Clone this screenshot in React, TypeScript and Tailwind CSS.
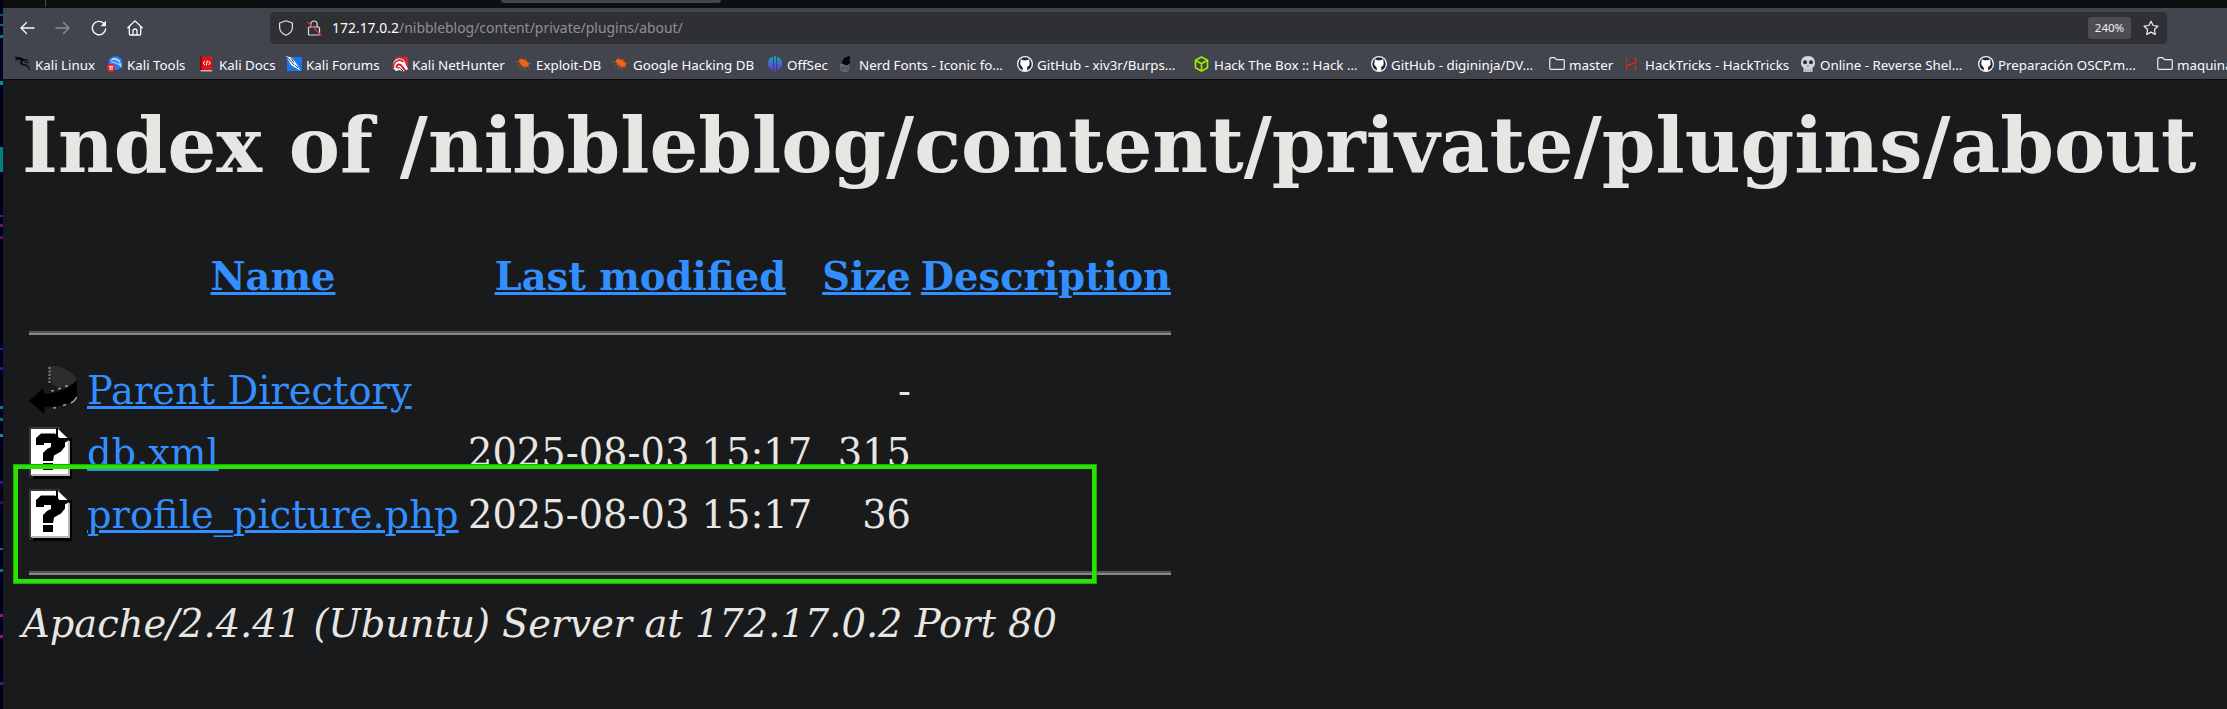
import React from "react";

const S = ({ children }: { children: React.ReactNode }) => (
  <svg viewBox="0 0 16 16" className="h-4 w-4 shrink-0" fill="none">{children}</svg>
);

const KaliIcon = () => (
  <S>
    <path d="M0 .8 5 1l4 2 3 .5 2 1.500-4-.5C6.500 5 6.500 7.500 9 8c4 .5 6 3 6 7.500-1.500-4-3-5.500-6-6C5 9 4 6.500 6 5L4 3.500 1 3z" fill="#08090a" />
    <path d="M0 4.500 5 3M9 6l5 .5" stroke="#08090a" strokeWidth=".9" />
  </S>
);
const ToolsIcon = () => (
  <S>
    <circle cx="8.500" cy="7" r="7" fill="#2878f0" />
    <path d="M3 4.500q4-2 7 0 4 2 4 6-2-3-5-3-2-2-5-1M5 3q4-2 8 2" stroke="#b5d3fb" strokeWidth="1.200" />
    <circle cx="4" cy="11.800" r="4" fill="#e8262e" />
    <path d="M2 10.500h4M3.200 10.500v3.500M5 10.500v3.500" stroke="#fff" strokeWidth=".9" />
  </S>
);
const DocsIcon = () => (
  <S>
    <path d="M1 .5h12v14H1z" fill="#e21318" />
    <path d="M1 0h1.800v16H1z" fill="#8c0b10" />
    <path d="M1.500 14H13v1.500H1.500z" fill="#c9b4bb" />
    <path d="M6 5 4.200 7 6 9m3.500-4 1.800 2-1.800 2M8.300 4.500l-1 5" stroke="#fff" />
  </S>
);
const ForumsIcon = () => (
  <S>
    <path d="M1 1h15v14H1z" fill="#1677ef" />
    <path d="m0 0 5 1.500 4 4 2 3 3.500 6.500L9 11.500 5 9z" fill="#f3f5f8" />
    <path d="m1 1 7 8M5 2.500l3 4M9 9l3 3" stroke="#26384d" strokeWidth=".9" />
  </S>
);
const NetHunterIcon = () => (
  <S>
    <path d="M3 1h13v13z" fill="#e0222e" />
    <path d="M1 12C0 5 4 2 8 2.500c4 .5 5 3 5.500 5.500L16 13l-4 2.500L7 14l-3 1z" fill="#fff" />
    <path d="M1.500 12c-.5-8 7-9.500 10-6" stroke="#d81e2e" strokeWidth="1.600" />
    <path d="M4.500 12c0-4.500 4-4.500 6-1l3 4" stroke="#d81e2e" strokeWidth="2" />
    <path d="M6 13c0-2 2-2 3 0l2 2" stroke="#1c1c20" />
  </S>
);
const BugIcon = () => (
  <S>
    <path d="M3 3.500q4-1.500 7 1l3 2.500-.5 3.500L8 11 5 9 3 6z" fill="#f26412" />
    <path d="M0 5.500l4 1M1.500 10l5-2M5 13l2-4M9 14l0-4M5 1.500l2 3M10 2.500 9 6M15.500 7.500 11 8M14 13.500l-4-4" stroke="#c9581d" strokeWidth=".7" />
  </S>
);
const OffSecIcon = () => (
  <S>
    <defs>
      <linearGradient id="offsec" x1="0" y1="0" x2="0" y2="16" gradientUnits="userSpaceOnUse">
        <stop stopColor="#14a8b8" /><stop offset="1" stopColor="#6a28dc" />
      </linearGradient>
    </defs>
    <path d="M6 .8v13.500A7 7 0 0 1 6 .8ZM10 .8v13.500A7 7 0 0 0 10 .8ZM7 .3h2V16H7z" fill="url(#offsec)" />
  </S>
);
const NerdIcon = () => (
  <S>
    <path d="M1 8.500q4-2 9 0v5L8 16H4l-3-2z" fill="#6c7076" />
    <path d="m3 6 2-4 5-2 1.500 1-1 2L11 7 8 9.500 3.500 8z" fill="#050607" />
    <path d="M3 10v5M5.500 10v6M8 10v5M1 12h9" stroke="#484c52" strokeWidth=".8" />
  </S>
);
const GitHubIcon = () => (
  <S>
    <circle cx="8" cy="8" r="8" fill="#f4f4f6" />
    <circle cx="8" cy="8" r="6.700" fill="#22262d" />
    <path d="m3.800 3 2.100 1.200h4.200L12.200 3l.3 3c.7 3-.7 4.500-2.800 4.900l.5 1.200V15H5.800v-3L5 10.500C3.500 10 2.800 8 3.500 6z" fill="#fff" />
  </S>
);
const BoxIcon = () => (
  <S><path d="m7.500 1 6 3.300v7.400l-6 3.400-6-3.400V4.300zM1.500 4.300l6 3.500 6-3.500M7.500 7.800V15" stroke="#9fef00" strokeWidth="1.600" strokeLinejoin="round" /></S>
);
const FolderIcon = () => (
  <S><path d="M.8 3q0-1.300 1.300-1.300h3.500l1.900 2H14q1.300 0 1.300 1.300v7q0 1.300-1.300 1.300H2.100Q.8 13.300.8 12z" stroke="#ededee" strokeWidth="1.200" /></S>
);
const TricksIcon = () => (
  <S><path d="M1.500 1.500V7M10.500 1.500V7L1.500 9.500V14.500M10.500 9v5.500" stroke="#e3261e" strokeWidth="1.300" /></S>
);
const SkullIcon = () => (
  <S>
    <path d="M8 0c5 0 7 3 7 7 0 2-.5 4-2.500 4.500V16h-9v-4.500C1.500 11 1 9 1 7c0-4 2-7 7-7Z" fill="#ccd6dd" />
    <circle cx="5" cy="6.300" r="2" fill="#292f33" /><circle cx="11" cy="6.300" r="2" fill="#292f33" />
    <path d="M7.200 10.500 8 9l.8 1.500z" fill="#292f33" />
    <path d="M5.500 13v3M8 13v3M10.500 13v3" stroke="#66757f" strokeWidth=".6" />
  </S>
);

const bookmarks: [string, React.FC, string][] = [
  ["Kali Linux", KaliIcon, "w-[92px]"],
  ["Kali Tools", ToolsIcon, "w-[92px]"],
  ["Kali Docs", DocsIcon, "w-[87px]"],
  ["Kali Forums", ForumsIcon, "w-[106px]"],
  ["Kali NetHunter", NetHunterIcon, "w-[124px]"],
  ["Exploit-DB", BugIcon, "w-[97px]"],
  ["Google Hacking DB", BugIcon, "w-[154px]"],
  ["OffSec", OffSecIcon, "w-[72px]"],
  ["Nerd Fonts - Iconic fo…", NerdIcon, "w-[178px]"],
  ["GitHub - xiv3r/Burps…", GitHubIcon, "w-[177px]"],
  ["Hack The Box :: Hack …", BoxIcon, "w-[177px]"],
  ["GitHub - digininja/DV…", GitHubIcon, "w-[178px]"],
  ["master", FolderIcon, "w-[76px]"],
  ["HackTricks - HackTricks", TricksIcon, "w-[175px]"],
  ["Online - Reverse Shel…", SkullIcon, "w-[178px]"],
  ["Preparación OSCP.m…", GitHubIcon, "w-[179px]"],
  ["maquina", FolderIcon, "w-[90px]"],
];

const ParentIcon = () => (
  <svg viewBox="0 0 48 49" className="mt-[6px] h-[49px] w-12" fill="none">
    <path d="M20 0h10q12 5 18 13v3Q38 20 30 22l-7-4z" fill="#2d2d2d" />
    <path d="M48 14v18Q38 41 16 41l-1 7L0 35l14-13 1 6q22-1 33-14z" fill="#000" />
    <path d="M20.500 1v16" stroke="#858585" strokeWidth="2" strokeDasharray="2 1.500" />
    <path d="m22 25 3-.5M29 23l3-.8M36 20.500l3-.8M24 42l3-.3M34 39.500l3-1M42 37l3-2 3-4" stroke="#999" strokeWidth="1.600" />
  </svg>
);

const UnknownIcon = () => (
  <svg viewBox="0 0 43 52" className="mt-[5px] h-[52px] w-[43px]" fill="none">
    <path d="M0 0h31v4H4v46H0z" fill="#3b3b3c" />
    <path d="M4 47h36V12h3v40H4z" fill="#000" />
    <path d="M2 2h25v10h13v36H2z" fill="#fff" />
    <path d="M3 48h37V14" stroke="#b5b5b5" strokeWidth="2" />
    <path d="m29 2 10 9.500H29z" fill="#fff" />
    <path d="M28 1v11h15" stroke="#000" strokeWidth="1.800" />
    <path d="M7 11l5-4.500h14l5 5h12l-7 4v4l-4 5-7 4-1 5.500h-10v-8l4-4 4-2v-4h-7v2H7z" fill="#000" />
    <path d="M14 36h10v7H14z" fill="#000" />
  </svg>
);

const files = [
  { name: "Parent Directory", date: "", size: "-", Icon: ParentIcon },
  { name: "db.xml", date: "2025-08-03 15:17", size: "315", Icon: UnknownIcon },
  { name: "profile_picture.php", date: "2025-08-03 15:17", size: "36", Icon: UnknownIcon },
];

const Link = ({ children }: { children: React.ReactNode }) => (
  <a className="cursor-pointer text-[#338fff] underline">{children}</a>
);

const Rule = () => (
  <div className="h-1 w-[1142px] border-t-2 border-b-2 border-t-[#565656] border-b-[#868686]" />
);

const wallpaper: [number, number, string][] = [
  [14, 2, "#0b5c70"], [24, 2, "#0b6c80"], [35, 3, "#087a8c"], [81, 4, "#078a98"], [147, 25, "#057f8a"],
  [215, 2, "#611570"], [224, 3, "#611570"], [236, 3, "#4f1068"], [348, 2, "#1c1c9c"], [367, 3, "#1c1c9c"],
  [406, 3, "#087f88"], [418, 3, "#087078"], [434, 3, "#0892a0"], [481, 3, "#440c90"], [501, 3, "#2c0c70"],
  [548, 2, "#087078"], [569, 3, "#087888"], [614, 3, "#8e168c"], [635, 3, "#8e168c"], [682, 3, "#5a1080"],
];

export default function App() {
  return (
    <div className="flex h-[709px] w-[2227px] overflow-hidden bg-[#181a1b]">
      <svg viewBox="0 0 3 709" className="h-[709px] w-[3px] shrink-0">
        <path d="M0 0h3v709H0z" fill="#00001e" />
        {wallpaper.map(([y, h, fill]) => <rect key={y} x="0" y={y} width="3" height={h} fill={fill} />)}
      </svg>

      <div className="flex min-w-0 flex-1 flex-col">
        <div className="flex h-2 shrink-0 bg-[#0e0f13]">
          <div className="ml-[42px] h-[7px] w-px bg-[#4a4b50]" />
          <div className="ml-[455px] h-[3px] w-[220px] rounded-b-[3px] bg-[#42454d]" />
        </div>

        <div className="flex h-[72px] shrink-0 flex-col border-b border-[#0c0d0f] bg-[#42454d] font-['Noto_Sans',sans-serif]">
          <div className="flex h-10 shrink-0 items-center">
            <div className="ml-4 flex w-[251px] gap-5">
              <S><path d="M15 8H2M7.500 2.500 2 8l5.500 5.500" stroke="#fbfbfe" strokeWidth="1.300" strokeLinecap="round" strokeLinejoin="round" /></S>
              <S><path d="M1 8h13M8.500 2.500 14 8l-5.500 5.500" stroke="#8b8d92" strokeWidth="1.300" strokeLinecap="round" strokeLinejoin="round" /></S>
              <S>
                <path d="M12.800 3.300A6.700 6.700 0 1 0 14.700 9" stroke="#fbfbfe" strokeWidth="1.400" strokeLinecap="round" />
                <path d="M15 .8v5.400H9.600z" fill="#fbfbfe" />
              </S>
              <S>
                <path d="M.8 7.800 8 .9l7.200 6.900M2.300 6.800v6.900q0 1.300 1.300 1.300h8.800q1.300 0 1.300-1.300V6.800M6 15v-4q0-2 2-2t2 2v4" stroke="#fbfbfe" strokeWidth="1.300" strokeLinecap="round" strokeLinejoin="round" />
              </S>
            </div>
            <div className="flex h-8 w-[1897px] items-center rounded-[4px] bg-[#2f3034] pl-2">
              <S><path d="M8 .8 14.400 3v4.200c0 3.700-2.700 6.400-6.400 8-3.700-1.600-6.400-4.300-6.400-8V3z" stroke="#e4e4e8" strokeWidth="1.200" strokeLinejoin="round" /></S>
              <span className="ml-3 flex">
                <S>
                  <path d="M3.500 7h9q1 0 1 1v6q0 1-1 1h-9q-1 0-1-1V8q0-1 1-1ZM4.800 7V4.200a3.200 3.200 0 0 1 6.400 0V7" stroke="#dcdce0" strokeWidth="1.200" />
                  <path d="m1.500 2 14 13.500" stroke="#e22850" strokeWidth="1.300" />
                </S>
              </span>
              <span className="ml-2.5 flex-1 whitespace-nowrap text-[13.95px] leading-8 text-[#8f8f94]">
                <span className="text-[#fbfbfe]">172.17.0.2</span>/nibbleblog/content/private/plugins/about/
              </span>
              <span className="flex h-[22px] w-[43px] items-center justify-center rounded-[3px] bg-[#4e4d52] text-[11.5px] text-[#f0f0f2]">240%</span>
              <span className="mr-2 ml-3 flex">
                <S><path d="m8 1.200 2.100 4.300 4.800.7-3.500 3.300.9 4.900L8 12.100l-4.300 2.300.9-4.900L1.100 6.200l4.800-.7z" stroke="#f0f0f2" strokeWidth="1.200" strokeLinejoin="round" /></S>
              </span>
            </div>
          </div>
          <div className="flex h-8 items-center pl-3 text-[13.33px]">
            {bookmarks.map(([label, Icon, width]) => (
              <div key={label} className={`flex shrink-0 items-center gap-1 whitespace-nowrap text-[#fbfbfe] ${width}`}>
                <Icon />
                <span className="pt-0.5 leading-5">{label}</span>
              </div>
            ))}
          </div>
        </div>

        <main className="relative flex flex-1 flex-col pt-5 font-['DejaVu_Serif',serif] text-[38.4px] text-[#e8e6e3]">
          <h1 className="ml-[19px] h-[90px] whitespace-nowrap text-[76.8px] leading-[90px] font-bold">
            Index of /nibbleblog/content/private/plugins/about
          </h1>
          <div className="mt-14 ml-[26px] flex w-[1142px] flex-col">
            <div className="flex h-[62px] leading-[62px] font-bold whitespace-nowrap">
              <div className="ml-[58px] w-[372px] text-center"><Link>Name</Link></div>
              <div className="ml-2.5 w-[343px] text-center"><Link>Last modified</Link></div>
              <div className="w-[99px] text-right"><Link>Size</Link></div>
              <div className="ml-2.5"><Link>Description</Link></div>
            </div>
            <div className="mt-[23px] mb-[25px]"><Rule /></div>
            {files.map(({ name, date, size, Icon }) => (
              <div key={name} className="flex h-[62px] leading-[62px] whitespace-nowrap">
                <div className="w-[58px]"><Icon /></div>
                <div className="w-[372px]"><Link>{name}</Link></div>
                <div className="ml-[9px] w-[344px]">{date}</div>
                <div className="w-[99px] text-right">{size}</div>
              </div>
            ))}
            <div className="mt-[25px]"><Rule /></div>
          </div>
          <address className="mt-[26px] ml-[19px] leading-[45px] whitespace-nowrap italic">
            Apache/2.4.41 (Ubuntu) Server at 172.17.0.2 Port 80
          </address>
          <div className="absolute top-[384px] left-[10px] h-[120px] w-[1084px] border-[5px] border-[#26e600] outline-1 -outline-offset-1 outline-[#22a80c]" />
        </main>
      </div>
    </div>
  );
}
